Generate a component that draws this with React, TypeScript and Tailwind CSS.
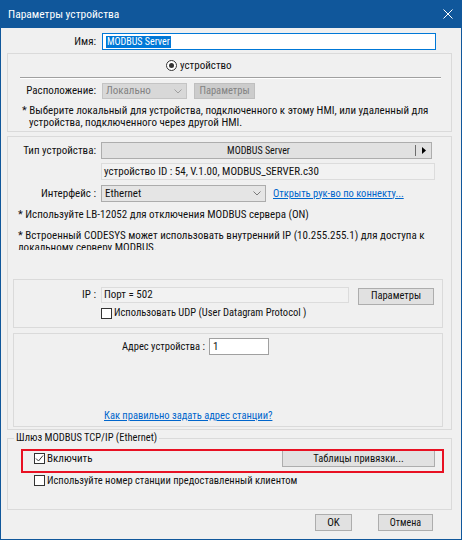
import React from 'react';

function Check({ checked }: { checked?: boolean }) {
  return (
    <span className="w-[11px] h-[11px] shrink-0 border border-[#333333] bg-white flex items-center justify-center">
      {checked && (
        <svg width="9" height="9" viewBox="0 0 9 9">
          <path d="M1 4.5 L3.5 7 L8 1.5" stroke="#333333" strokeWidth="1" fill="none" />
        </svg>
      )}
    </span>
  );
}

function Radio() {
  return (
    <span className="w-[11px] h-[11px] rounded-full border border-[#333333] bg-white flex items-center justify-center">
      <span className="w-[5px] h-[5px] rounded-full bg-[#333333]" />
    </span>
  );
}

function Chevron({ color = '#7a7a7a' }: { color?: string }) {
  return (
    <svg width="8" height="5" viewBox="0 0 8 5">
      <path d="M0.5 0.5 L4 4 L7.5 0.5" stroke={color} strokeWidth="1" fill="none" />
    </svg>
  );
}

function Btn({ children, className = '' }: { children: React.ReactNode; className?: string }) {
  return (
    <div className={`h-[17px] flex items-center justify-center border border-[#adadad] bg-[#e1e1e1] whitespace-nowrap ${className}`}>
      {children}
    </div>
  );
}

export default function App() {
  return (
    <div className="w-[464px] h-[544px] bg-white font-['Roboto',sans-serif] [font-stretch:75%] text-[11px] leading-[12px] text-[#111111]">
      <div className="w-[462px] h-[540px] flex flex-col border-x border-b border-[#10579b] bg-[#f0f0f0]">
        {/* title bar */}
        <div className="h-[28px] shrink-0 bg-[#10579b] flex items-center justify-between pl-[7px] pr-[8px] text-white text-[11.5px]">
          <span>Параметры устройства</span>
          <svg width="10" height="10" viewBox="0 0 10 10">
            <path d="M0.5 0.5 L9.5 9.5 M9.5 0.5 L0.5 9.5" stroke="#ffffff" strokeWidth="1" />
          </svg>
        </div>

        <div className="flex-1 flex flex-col whitespace-nowrap">
          {/* name */}
          <div className="mt-[5px] h-[17px] flex items-center">
            <span className="w-[95px] text-right">Имя:</span>
            <div className="ml-[6px] w-[334px] h-full border border-[#0078d7] bg-white flex items-center pl-[3px]">
              <span className="bg-[#0078d7] text-white px-[1px] text-[10px]">MODBUS Server</span>
            </div>
          </div>

          {/* location group */}
          <div className="mt-[3px] ml-[6px] w-[445px] h-[79px] shrink-0 border border-[#dadada]">
            <div className="mt-[5px] ml-[158px] h-[13px] flex items-center gap-[3px]">
              <Radio />
              <span>устройство</span>
            </div>
            <div className="mt-[5px] ml-[12px] w-[421px] border-t border-[#a0a0a0] border-b border-b-white" />
            <div className="mt-[4px] h-[16px] flex items-center">
              <span className="w-[88px] text-right">Расположение:</span>
              <div className="ml-[6px] w-[85px] h-full border border-[#c4c4c4] bg-[#d8d8d8] text-[#838383] flex items-center justify-between pl-[3px] pr-[4px]">
                <span>Локально</span>
                <Chevron color="#a0a0a0" />
              </div>
              <div className="ml-[7px] w-[61px] h-full border border-[#bfbfbf] bg-[#cccccc] text-[#838383] text-[10.5px] flex items-center justify-center">
                Параметры
              </div>
            </div>
            <div className="mt-[6px] pl-[14px]">
              * Выберите локальный для устройства, подключенного к этому HMI, или удаленный для
              <br />
              <span className="pl-[7px]">устройства, подключенного через другой HMI.</span>
            </div>
          </div>

          {/* device group */}
          <div className="mt-[4px] ml-[6px] w-[445px] h-[294px] shrink-0 border border-[#dadada]">
            <div className="mt-[5px] h-[17px] flex items-center">
              <span className="w-[88px] text-right">Тип устройства:</span>
              <div className="ml-[5px] w-[331px] h-full border border-[#adadad] bg-[#e1e1e1] flex items-center">
                <span className="flex-1 text-center text-[10px]">MODBUS Server</span>
                <span className="w-px h-[11px] bg-[#6d6d6d]" />
                <span className="w-[15px] flex justify-center">
                  <svg width="4" height="7" viewBox="0 0 4 7">
                    <path d="M0 0 L4 3.5 L0 7 Z" fill="#000000" />
                  </svg>
                </span>
              </div>
            </div>
            <div className="mt-[4px] ml-[93px] w-[334px] h-[17px] border border-[#dcdcdc] bg-[#f2f2f2] flex items-center pl-[2px]">
              устройство ID : 54, V.1.00, MODBUS_SERVER.c30
            </div>
            <div className="mt-[5px] h-[17px] flex items-center">
              <span className="w-[88px] text-right">Интерфейс :</span>
              <div className="ml-[5px] w-[165px] h-full border border-[#acacac] bg-[#e5e5e5] flex items-center justify-between pl-[3px] pr-[4px]">
                <span>Ethernet</span>
                <Chevron />
              </div>
              <span className="ml-[7px] text-[#0066cc] underline text-[10.5px]">Открыть рук-во по коннекту...</span>
            </div>
            <div className="mt-[7px] pl-[10px]">* Используйте LB-12052 для отключения MODBUS сервера (ON)</div>
            <div className="mt-[9px] pl-[10px] h-[20px] overflow-hidden">
              * Встроенный CODESYS может использовать внутренний IP (10.255.255.1) для доступа к
              <br />
              локальному серверу MODBUS.
            </div>

            {/* IP box */}
            <div className="mt-[29px] ml-[5px] w-[430px] h-[49px] border border-[#dadada]">
              <div className="mt-[7px] h-[16px] flex items-center">
                <span className="w-[82px] text-right">IP :</span>
                <div className="ml-[5px] w-[248px] h-full border border-[#dcdcdc] bg-[#f2f2f2] flex items-center pl-[2px]">
                  Порт = 502
                </div>
                <Btn className="ml-[9px] w-[76px] mt-[2px] text-[10.5px]">Параметры</Btn>
              </div>
              <div className="mt-[4px] ml-[87px] h-[12px] flex items-center gap-[2px]">
                <Check />
                <span className="text-[10.5px]">Использовать UDP (User Datagram Protocol )</span>
              </div>
            </div>

            {/* address box */}
            <div className="mt-[5px] ml-[5px] w-[430px] h-[94px] border border-[#dadada]">
              <div className="mt-[4px] h-[17px] flex items-center">
                <span className="w-[191px] text-right text-[10.5px]">Адрес устройства :</span>
                <div className="ml-[4px] w-[60px] h-full border border-[#a0a0a0] bg-white flex items-center pl-[3px]">1</div>
              </div>
              <div className="mt-[55px] ml-[90px] text-[#0066cc] underline text-[10.5px]">Как правильно задать адрес станции?</div>
            </div>
          </div>

          {/* gateway */}
          <fieldset className="mt-[2px] ml-[6px] w-[445px] h-[78px] shrink-0 border border-[#dadada]">
            <legend className="ml-[6px] px-[2px] leading-[12px] text-[10.5px]">Шлюз MODBUS TCP/IP (Ethernet)</legend>
            <div className="relative mt-[6px] h-[17px] flex items-center">
              <span className="ml-[26px] flex items-center gap-[2px]">
                <Check checked />
                <span>Включить</span>
              </span>
              <Btn className="ml-auto mr-[16px] w-[153px] text-[10.5px]">Таблицы привязки...</Btn>
              <div className="absolute left-[13px] top-[-1px] w-[423px] h-[24px] border-2 border-[#e81123] pointer-events-none" />
            </div>
            <div className="mt-[8px] ml-[26px] h-[11px] flex items-center gap-[2px]">
              <Check />
              <span className="text-[10.5px]">Используйте номер станции предоставленный клиентом</span>
            </div>
          </fieldset>

          {/* buttons */}
          <div className="mt-[4px] flex justify-end pr-[28px]">
            <Btn className="w-[37px] border-[#0078d7]">OK</Btn>
            <Btn className="ml-[26px] w-[55px] text-[10px]">Отмена</Btn>
          </div>
        </div>
      </div>
    </div>
  );
}
